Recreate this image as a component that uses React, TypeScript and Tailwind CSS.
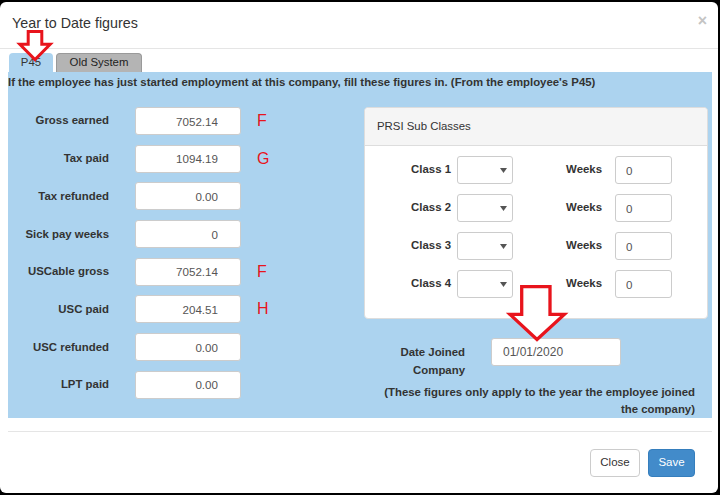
import { ReactNode } from "react";

// ============================================
// Year to Date figures modal
// ============================================

interface FigureRow {
  label: string;
  value: string;
  mark?: string;
}

const figures: FigureRow[] = [
  { label: "Gross earned", value: "7052.14", mark: "F" },
  { label: "Tax paid", value: "1094.19", mark: "G" },
  { label: "Tax refunded", value: "0.00" },
  { label: "Sick pay weeks", value: "0" },
  { label: "USCable gross", value: "7052.14", mark: "F" },
  { label: "USC paid", value: "204.51", mark: "H" },
  { label: "USC refunded", value: "0.00" },
  { label: "LPT paid", value: "0.00" },
];

const classes = ["Class 1", "Class 2", "Class 3", "Class 4"];

function Label({ children, className }: { children: ReactNode; className: string }) {
  return (
    <div className={"text-right text-[11.4px] font-bold text-[#333] " + className}>
      {children}
    </div>
  );
}

function SelectBox() {
  return (
    <div className="ml-[6px] flex h-[28px] w-[56px] items-center justify-end rounded-[3px] border border-[#ccc] bg-white pr-[5px]">
      <svg width="7" height="5" viewBox="0 0 7 5">
        <path d="M0 0 L7 0 L3.5 5 Z" fill="#555" />
      </svg>
    </div>
  );
}

function Arrows() {
  return (
    <svg
      className="pointer-events-none absolute left-0 top-0"
      width="720"
      height="495"
      viewBox="0 0 720 495"
    >
      <polygon
        points="28.2,31.5 41.8,31.5 41.8,44.2 50.2,44.2 35,59.5 19.8,44.2 28.2,44.2"
        fill="#fff"
        stroke="#e8141c"
        strokeWidth="3"
      />
      <polygon
        points="521.7,286.7 550,286.7 550,314.4 564.3,314.4 537,339.5 510,314.4 521.7,314.4"
        fill="#fff"
        stroke="#e8141c"
        strokeWidth="3.3"
      />
    </svg>
  );
}

export default function App() {
  return (
    <div className="relative h-[495px] w-[720px] overflow-hidden bg-black pt-[2px] font-['Liberation_Sans',Arial,sans-serif]">
      <div className="flex h-[491px] w-[718px] flex-col rounded-[6px] bg-white">
        {/* header */}
        <div className="flex h-[47px] items-start justify-between border-b border-[#e5e5e5] pl-[12px] pr-[11px] pt-[11px]">
          <div className="text-[14.3px] leading-[20px] text-[#333]">Year to Date figures</div>
          <div className="text-[16px] font-bold leading-[16px] text-[#c4c4c4]">×</div>
        </div>

        {/* body */}
        <div className="pl-[8px] pr-[6px] pt-[4px]">
          <div className="flex h-[19px] items-end">
            <div className="ml-px flex h-[19px] w-[44px] items-center justify-center rounded-t-[4px] bg-[#acd3ef] text-[11.4px] text-[#333]">
              P45
            </div>
            <div className="ml-[3px] flex h-[19px] w-[86px] items-center justify-center rounded-t-[4px] border border-b-0 border-[#9a9a9a] bg-[#b4b4b4] text-[11.4px] text-[#222]">
              Old System
            </div>
          </div>

          <div className="h-[346px] bg-[#acd3ef]">
            <div className="h-[20px] text-[11.4px] font-bold leading-[20px] text-[#333]">
              If the employee has just started employment at this company, fill these figures in. (From the employee's P45)
            </div>

            <div className="mt-[15px] flex">
              {/* left figures */}
              <div className="flex w-[356px] flex-col gap-[9.7px]">
                {figures.map((row) => (
                  <div key={row.label} className="flex h-[28px] items-center">
                    <Label className="w-[101px]">{row.label}</Label>
                    <input
                      readOnly
                      value={row.value}
                      className="ml-[26px] h-[28px] w-[106px] rounded-[3px] border border-[#ccc] bg-white pr-[22px] text-right text-[11.6px] text-[#555] outline-none"
                    />
                    {row.mark && (
                      <span className="ml-[16px] text-[16px] leading-[16px] text-[#e8141c]">
                        {row.mark}
                      </span>
                    )}
                  </div>
                ))}
              </div>

              {/* right column */}
              <div className="w-[344px]">
                <div className="h-[212px] rounded-[4px] border border-[#ddd] bg-white">
                  <div className="flex h-[38px] items-center rounded-t-[4px] border-b border-[#ddd] bg-[#f5f5f5] px-[12px] text-[11.4px] text-[#333]">
                    PRSI Sub Classes
                  </div>
                  <div className="flex flex-col gap-[10px] pt-[10px]">
                    {classes.map((c) => (
                      <div key={c} className="flex h-[28px] items-center">
                        <Label className="w-[86px]">{c}</Label>
                        <SelectBox />
                        <Label className="w-[89px]">Weeks</Label>
                        <input
                          readOnly
                          value="0"
                          className="ml-[13px] h-[28px] w-[57px] rounded-[3px] border border-[#ccc] bg-white pl-[10px] text-[11.6px] text-[#555] outline-none"
                        />
                      </div>
                    ))}
                  </div>
                </div>

                <div className="mt-[19px] flex items-start">
                  <Label className="w-[101px] pt-[5px] leading-[18px]">
                    Date Joined
                    <br />
                    Company
                  </Label>
                  <input
                    readOnly
                    value="01/01/2020"
                    className="ml-[26px] h-[28px] w-[130px] rounded-[3px] border border-[#ccc] bg-white pl-[11px] text-[12px] text-[#555] outline-none"
                  />
                </div>

                <Label className="mt-[5px] w-[331px] leading-[17px]">
                  (These figures only apply to the year the employee joined
                  <br />
                  the company)
                </Label>
              </div>
            </div>
          </div>

          <div className="mt-[13px] border-t border-[#e5e5e5]" />

          {/* footer */}
          <div className="flex justify-end gap-[8px] pr-[17px] pt-[17px]">
            <button className="h-[28px] w-[50px] rounded-[4px] border border-[#ccc] bg-white text-[11.5px] text-[#333]">
              Close
            </button>
            <button className="h-[28px] w-[47px] rounded-[4px] border border-[#357ebd] bg-[#428bca] text-[11.5px] text-white">
              Save
            </button>
          </div>
        </div>
      </div>
      <Arrows />
    </div>
  );
}
